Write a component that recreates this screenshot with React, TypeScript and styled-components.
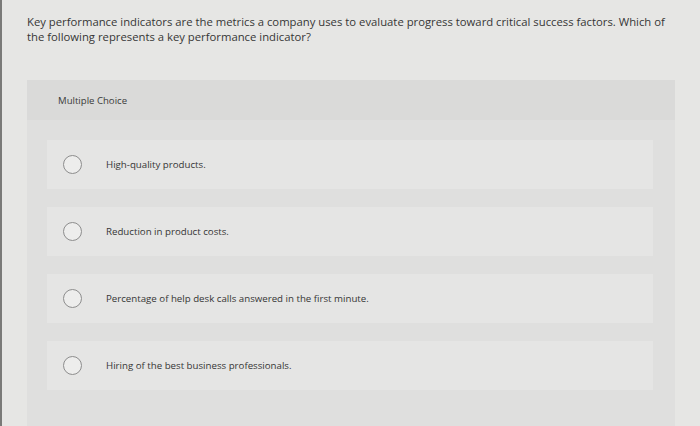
import styled, { createGlobalStyle } from "styled-components";

const GlobalStyle = createGlobalStyle`
  html, body {
    margin: 0;
    padding: 0;
    background: #e6e6e4;
  }
`;

const Page = styled.div`
  width: 700px;
  height: 426px;
  box-sizing: border-box;
  border-left: 2px solid #7a7a78;
  padding: 14px 0 0 25px;
  overflow: hidden;
  font-family: "Open Sans", "Liberation Sans", sans-serif;
  color: #333;
`;

const Question = styled.p`
  margin: 0;
  width: 645px;
  font-size: 11.3px;
  line-height: 15px;
  color: #363636;
`;

const Panel = styled.div`
  margin-top: 36px;
  width: 648px;
  height: 350px;
  background: #dfdfde;
  display: flex;
  flex-direction: column;
`;

const PanelHeader = styled.div`
  height: 40px;
  display: flex;
  align-items: center;
  padding-left: 31px;
  background: #dadad9;
  font-size: 9.6px;
  color: #3a3a3a;
`;

const Options = styled.div`
  display: flex;
  flex-direction: column;
  gap: 18px;
  padding: 20px 22px 0 20px;
`;

const Option = styled.label`
  height: 49px;
  display: flex;
  align-items: center;
  padding-left: 16px;
  background: #e5e5e4;
  cursor: pointer;
`;

const Radio = styled.span`
  width: 17px;
  height: 17px;
  border-radius: 50%;
  border: 1.5px solid #8d8d8d;
  background: #ededec;
  flex-shrink: 0;
`;

const OptionText = styled.span`
  margin-left: 24px;
  font-size: 9.7px;
  color: #353535;
`;

const options = [
  "High-quality products.",
  "Reduction in product costs.",
  "Percentage of help desk calls answered in the first minute.",
  "Hiring of the best business professionals.",
];

export default function App() {
  return (
    <>
      <GlobalStyle />
      <Page>
        <Question>
          Key performance indicators are the metrics a company uses to evaluate progress toward critical success factors. Which of
          the following represents a key performance indicator?
        </Question>
        <Panel>
          <PanelHeader>Multiple Choice</PanelHeader>
          <Options>
            {options.map((o) => (
              <Option key={o}>
                <Radio />
                <OptionText>{o}</OptionText>
              </Option>
            ))}
          </Options>
        </Panel>
      </Page>
    </>
  );
}
